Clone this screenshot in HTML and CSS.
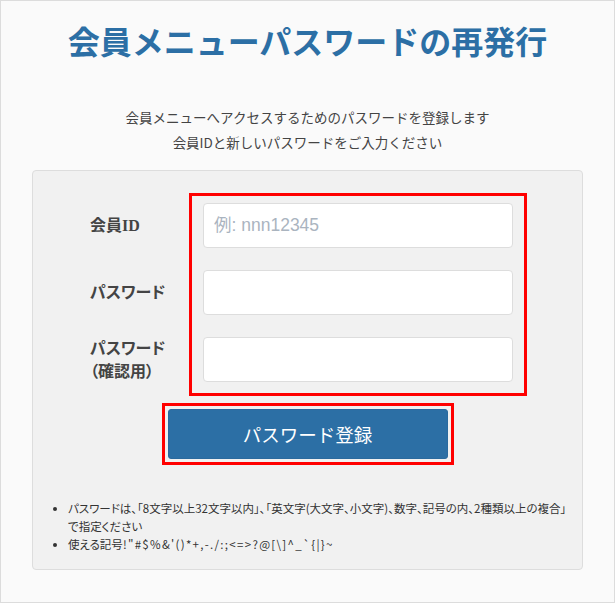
FILE: index.html
```html
<!DOCTYPE html>
<html lang="ja">
<head>
  <meta charset="UTF-8">
  <meta name="viewport" content="width=device-width, initial-scale=1.0">
  <title>会員メニューパスワードの再発行</title>
  <link rel="stylesheet" href="styles.css">
</head>
<body>
  <div class="page">
    <h1 class="title">会員メニューパスワードの再発行</h1>
    <p class="lead">会員メニューへアクセスするためのパスワードを登録します<br>会員IDと新しいパスワードをご入力ください</p>

    <div class="panel">
      <div class="form-row">
        <div class="labels">
          <label class="label" for="memberId">会員ID</label>
          <label class="label" for="pass1">パスワード</label>
          <label class="label" for="pass2">パスワード<br>（確認用）</label>
        </div>
        <div class="mark fields">
          <input type="text" id="memberId" class="field" placeholder="例: nnn12345">
          <input type="password" id="pass1" class="field">
          <input type="password" id="pass2" class="field">
        </div>
      </div>

      <div class="btn-wrap">
        <div class="mark btn-mark">
          <button class="submit-btn">パスワード登録</button>
        </div>
      </div>

      <ul class="notes">
        <li>パスワードは、「8文字以上32文字以内」、「英文字(大文字、小文字)、数字、記号の内、2種類以上の複合」<br>で指定ください</li>
        <li>使える記号<span class="symbols">!"#$%&amp;'()*+,-./:;&lt;=&gt;?@[\]^_`{|}~</span></li>
      </ul>
    </div>
  </div>
</body>
</html>
```

FILE: styles.css
```css
body {
  margin: 0;
  font-family: "Noto Sans CJK JP", "Noto Sans", sans-serif;
  color: #444;
}
.page {
  width: 615px;
  height: 603px;
  box-sizing: border-box;
  border: 1px solid #dcdcdc;
  background: #fafafa;
  overflow: hidden;
}
.title {
  margin: 20px 0 0;
  font-size: 32px;
  line-height: 38px;
  font-weight: bold;
  color: #2c6fa5;
  text-align: center;
}
.lead {
  margin: 46px 0 0;
  font-size: 13.5px;
  line-height: 25px;
  text-align: center;
  color: #444;
}
.panel {
  margin: 15px 31px 0;
  background: #f1f1f1;
  border: 1px solid #dddddd;
  border-radius: 4px;
  padding: 22px 0 16px;
}
.form-row { display: flex; }
.labels {
  width: 99px;
  padding: 10px 0 0 57px;
  display: flex;
  flex-direction: column;
  gap: 22px;
}
.label {
  height: 45px;
  display: flex;
  align-items: center;
  font-family: "Liberation Serif", "Noto Sans CJK JP", serif;
  font-weight: bold;
  font-size: 16px;
  line-height: 23px;
  color: #444;
  font-feature-settings: "palt";
}
.mark { border: 3px solid #ff0000; }
.fields {
  width: 338px;
  box-sizing: border-box;
  padding: 7px 11px 11px;
  display: flex;
  flex-direction: column;
  gap: 22px;
}
.field {
  height: 45px;
  box-sizing: border-box;
  border: 1px solid #dddddd;
  border-radius: 4px;
  background: #ffffff;
  padding: 0 10px;
  font-family: "Liberation Sans", "Noto Sans CJK JP", sans-serif;
  font-size: 17.5px;
  color: #333;
}
.field::placeholder { color: #aab4bf; }
.btn-wrap {
  margin-top: 7px;
  display: flex;
  justify-content: center;
}
.btn-mark { padding: 3px; }
.submit-btn {
  display: block;
  width: 280px;
  height: 50px;
  background: #2c6fa5;
  border: 1px solid #2a6a9e;
  border-radius: 3px;
  color: #ffffff;
  font-family: "Noto Sans CJK JP", sans-serif;
  font-size: 18.5px;
  cursor: pointer;
}
.submit-btn:hover { background: #245d8b; }
.notes {
  margin: 34px 0 0;
  padding-left: 35px;
  font-size: 11.5px;
  line-height: 18px;
  color: #333;
  font-feature-settings: "palt";
}
.symbols { letter-spacing: 1.3px; }
```
